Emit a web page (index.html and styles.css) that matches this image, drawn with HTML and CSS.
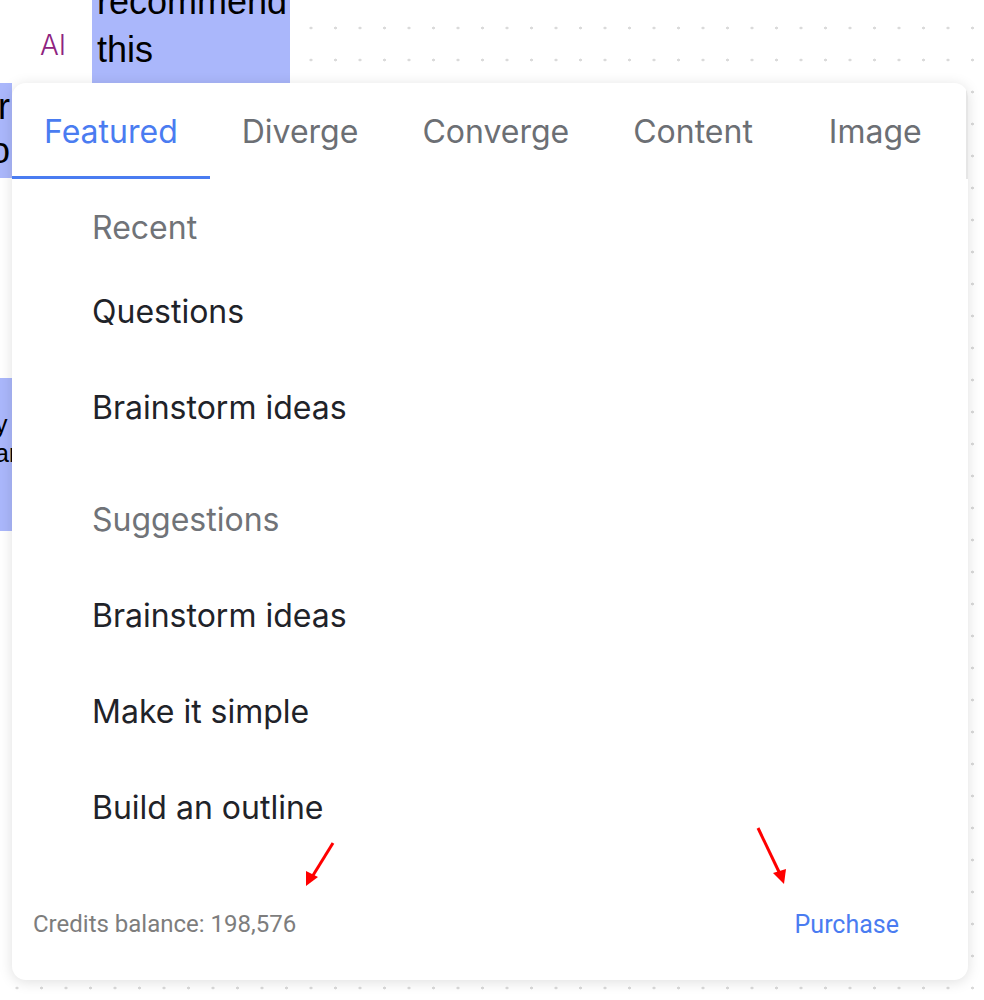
FILE: index.html
```html
<!DOCTYPE html>
<html lang="en">
<head>
    <meta charset="UTF-8">
    <meta name="viewport" content="width=device-width, initial-scale=1.0">
    <title>AI prompts</title>
    <link rel="stylesheet" href="styles.css">
</head>
<body>
    <div class="board">
        <div class="sticky sticky-main">recommend<br>this</div>
        <div class="sticky sticky-left-a">r<br>o</div>
        <div class="sticky sticky-left-b">y<br>ar</div>
        <div class="ai-node">AI</div>

        <div class="ai-panel">
            <nav class="tabs">
                <button class="tab active">Featured</button>
                <button class="tab">Diverge</button>
                <button class="tab">Converge</button>
                <button class="tab">Content</button>
                <button class="tab">Image</button>
            </nav>

            <div class="prompt-list">
                <section class="group">
                    <div class="group-title">Recent</div>
                    <div class="prompt">Questions</div>
                    <div class="prompt">Brainstorm ideas</div>
                </section>
                <section class="group">
                    <div class="group-title">Suggestions</div>
                    <div class="prompt">Brainstorm ideas</div>
                    <div class="prompt">Make it simple</div>
                    <div class="prompt">Build an outline</div>
                </section>
            </div>

            <div class="panel-footer">
                <span class="credits">Credits balance: 198,576</span>
                <a class="purchase" href="#">Purchase</a>
            </div>
        </div>

        <!-- red arrows drawn on top of the screenshot -->
        <svg class="annotations" width="984" height="1000" viewBox="0 0 984 1000">
            <line x1="333" y1="843" x2="312" y2="877" stroke="#ff0000" stroke-width="3"/>
            <polygon points="306,886 306,871 318,877" fill="#ff0000"/>
            <line x1="758" y1="828" x2="780" y2="874" stroke="#ff0000" stroke-width="3"/>
            <polygon points="784,884 773,873 786,869" fill="#ff0000"/>
        </svg>
    </div>
</body>
</html>
```

FILE: styles.css
```css
body {
    margin: 0;
    padding: 0;
    background-color: #fff;
    font-family: Inter, "Noto Sans", sans-serif;
    overflow: hidden;
}

.board {
    position: relative;
    width: 984px;
    height: 1000px;
    overflow: hidden;
    background-color: #fff;
    background-image: radial-gradient(circle, #dadada 1.2px, transparent 1.7px);
    background-size: 24.5px 32px;
    background-position: 4.75px 12px;
}

.sticky {
    position: absolute;
    background-color: #aab7fb;
    color: #000;
    font-family: "Liberation Sans", Arial, sans-serif;
    font-size: 36px;
    line-height: 48px;
    box-sizing: border-box;
}

.sticky-main {
    left: 92px;
    top: -22px;
    width: 198px;
    height: 105px;
    padding-left: 5px;
}

.sticky-left-a {
    left: -60px;
    top: 83px;
    width: 72px;
    height: 95px;
    padding-right: 2px;
    padding-top: 2px;
    text-align: right;
    line-height: 44px;
}

.sticky-left-b {
    left: -12px;
    top: 378px;
    width: 40px;
    height: 153px;
    padding-left: 7px;
    padding-top: 32px;
    font-size: 25px;
    line-height: 29px;
}

.ai-node {
    position: absolute;
    left: 0;
    top: 0;
    width: 92px;
    height: 83px;
    background-color: #fff;
    border-radius: 0 10px 0 0;
    display: flex;
    align-items: center;
    justify-content: center;
    padding: 6px 0 0 14px;
    box-sizing: border-box;
    color: #8e2380;
    font-size: 28px;
    font-weight: 300;
}

.ai-panel {
    position: absolute;
    left: 12px;
    top: 83px;
    width: 956px;
    height: 897px;
    background-color: #fff;
    border-radius: 14px;
    box-shadow: 0 2px 14px rgba(0, 0, 0, 0.13);
    overflow: hidden;
    display: flex;
    flex-direction: column;
}

.tabs {
    display: flex;
    height: 96px;
    border-right: 2px solid #e6e6e6;
}

.tab {
    background: none;
    border: none;
    margin: 0;
    padding: 4px 32px 0;
    font-family: Inter, "Noto Sans", sans-serif;
    font-size: 32px;
    color: #6c6f74;
    border-bottom: 3px solid transparent;
    cursor: pointer;
}

.tab:last-child {
    margin-left: 12px;
}

.tab.active {
    color: #4a7cf1;
    border-bottom-color: #4a7cf1;
}

.prompt-list {
    flex: 1;
    padding: 13px 0 0 80px;
}

.group + .group {
    margin-top: 28px;
}

.group-title {
    height: 72px;
    line-height: 72px;
    font-size: 32px;
    color: #707378;
}

.group + .group .group-title {
    height: 84px;
}

.prompt {
    height: 96px;
    line-height: 96px;
    font-size: 32px;
    color: #1f2329;
}

.panel-footer {
    display: flex;
    justify-content: space-between;
    align-items: center;
    height: 124px;
    padding: 12px 69px 0 21px;
    box-sizing: border-box;
    font-family: Roboto, "Liberation Sans", sans-serif;
    font-size: 24px;
}

.credits {
    color: #7d7d7d;
}

.purchase {
    color: #4a7cf1;
    font-size: 25px;
    text-decoration: none;
}

.annotations {
    position: absolute;
    left: 0;
    top: 0;
    pointer-events: none;
}
```
